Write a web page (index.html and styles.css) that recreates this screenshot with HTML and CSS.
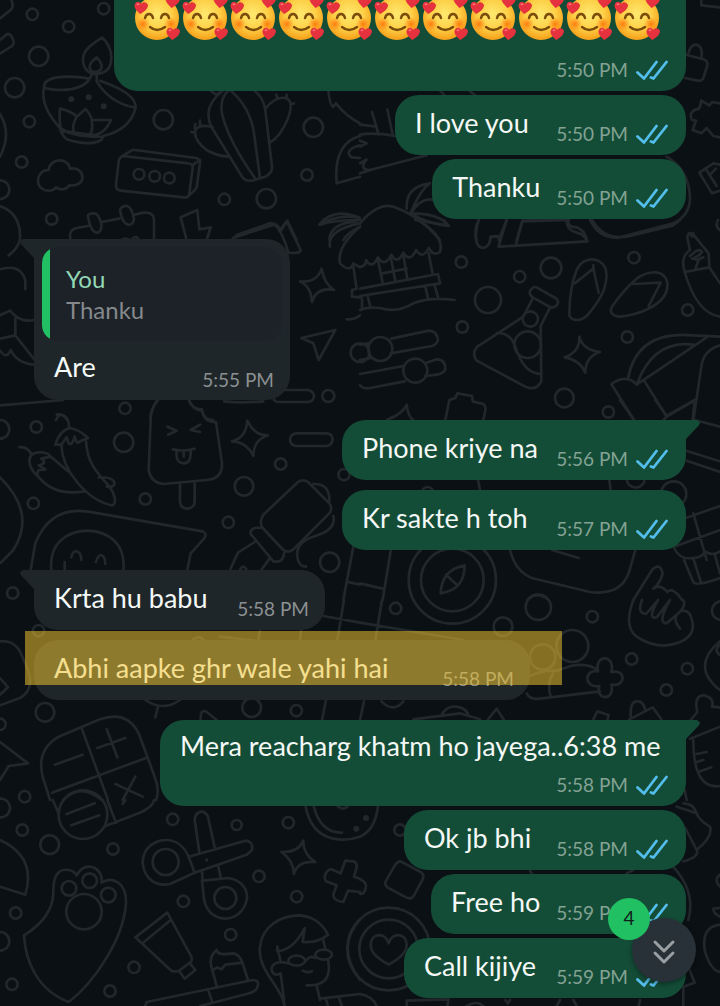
FILE: index.html
```html
<!DOCTYPE html>
<html lang="en">
<head>
<meta charset="utf-8">
<meta name="viewport" content="width=device-width, initial-scale=1">
<title>Chat</title>
<link rel="stylesheet" href="styles.css">
</head>
<body>
<svg class="defs" width="0" height="0" aria-hidden="true">
  <defs>
    <radialGradient id="face" cx="50%" cy="42%" r="56%">
      <stop offset="0" stop-color="#ffe970"/><stop offset=".6" stop-color="#fdd047"/><stop offset="1" stop-color="#f6a21b"/>
    </radialGradient>
    <radialGradient id="cheek"><stop offset="0" stop-color="#ff7a0c"/><stop offset="1" stop-color="#ff8d1a" stop-opacity="0"/></radialGradient>
    <symbol id="heart" viewBox="0 0 14 14">
      <path d="M6 13C3 10-1 6 1 3 2 0 6 0 7 3 9 0 13 1 14 4 14 8 10 11 6 13Z" fill="#e6323e"/>
      <path d="M3 4Q4 2 5 4" stroke="#ff7078" stroke-width="1.5" fill="none"/>
    </symbol>
    <symbol id="love" viewBox="0 0 48 48">
      <circle cx="23" cy="25" r="22" fill="url(#face)"/>
      <circle cx="9" cy="31" r="7" fill="url(#cheek)"/><circle cx="37" cy="31" r="7" fill="url(#cheek)"/>
      <path d="M11 25Q12 21 15 21T19 25M27 25Q28 21 31 21T35 25" fill="none" stroke="#7b4b0b" stroke-width="2.4" stroke-linecap="round"/>
      <path d="M16 34Q23 40 31 34" fill="none" stroke="#7b4b0b" stroke-width="2.4" stroke-linecap="round"/>
      <use href="#heart" x="0" y="8" width="14" height="14"/>
      <use href="#heart" x="31" y="1" width="15" height="15"/>
      <use href="#heart" x="32" y="34" width="14" height="14"/>
    </symbol>
    <symbol id="ticks" viewBox="0 0 32 20">
      <path d="M1.5 12.5 8 18.5 20.500 2M15 17.500 17.500 18.500 30.500 2" fill="none" stroke="#53bdeb" stroke-width="2.800" stroke-linecap="round" stroke-linejoin="round"/>
    </symbol>
  </defs>
</svg>

<main class="chat">
  <svg class="wallpaper" viewBox="0 0 720 1006" preserveAspectRatio="xMidYMin slice" aria-hidden="true">
    <g transform="scale(.33333)">
      <circle cx="97" cy="43" r="17"/><circle cx="206" cy="80" r="17"/><circle cx="311" cy="26" r="17"/><circle cx="116" cy="169" r="29"/><circle cx="44" cy="263" r="29"/><circle cx="88" cy="365" r="17"/><circle cx="65" cy="486" r="17"/><circle cx="490" cy="359" r="29"/><circle cx="940" cy="382" r="29"/><circle cx="921" cy="525" r="17"/><circle cx="673" cy="598" r="17"/><circle cx="799" cy="596" r="29"/><circle cx="155" cy="657" r="17"/><circle cx="0" cy="569" r="28"/>
      <path d="M0 55 34 28Q42 18 34 0M0 120 22 102Q34 100 41 125 42 132 36 138L0 161M0 342Q36 400 0 470"/>
      <path d="M306 113C276 132 246 152 249 182 252 212 270 224 290 222 320 220 334 204 334 172 334 146 320 124 306 113ZM290 172C274 184 267 194 269 204 271 213 278 216 288 216 299 214 305 208 305 198 304 186 296 178 290 172ZM276 222Q260 270 180 270 140 268 132 262 130 240 170 232 220 226 268 236M290 222V244Q330 310 407 323 410 280 300 242M132 262Q120 320 180 384 182 400 200 418 270 440 304 420L310 408Q390 390 407 323M180 326Q216 334 230 350L257 327Q276 350 275 360L333 360Q310 410 270 404L222 398 184 392Q176 360 180 326ZM230 350Q214 380 222 398M275 360Q280 390 270 404M184 386Q220 412 308 410"/>
      <circle class="dot" cx="214" cy="298" r="9"/><circle class="dot" cx="266" cy="292" r="9"/><circle class="dot" cx="311" cy="319" r="9"/>
      <path d="M126 566C104 550 114 510 146 510 150 472 206 472 210 506 256 498 264 562 208 556 194 574 176 568 168 562 156 576 138 574 126 566Z"/>
      <path d="M368 468 566 490Q580 494 578 504L568 580Q566 594 552 592L362 572Q346 570 348 554L356 484Q358 472 368 468L390 454Q396 448 406 450L588 474Q602 478 600 488L590 562Q586 572 560 592M576 496 600 480"/>
      <circle cx="417" cy="523" r="16"/><circle cx="464" cy="529" r="16"/><circle cx="508" cy="534" r="16"/>
      <path d="M630 270Q640 280 650 284L670 270Q620 310 626 350 628 374 640 390L726 530Q734 544 756 542L796 530Q818 518 816 500L796 330Q790 290 760 270M684 272Q656 300 668 350 690 430 766 536M690 270Q750 320 762 400L780 534M638 382Q600 370 586 390 580 420 620 450 650 468 684 470M796 326Q830 284 862 296 882 310 862 360 840 410 812 426M584 384 586 372M600 376V362M574 396 584 398M832 292 828 284M858 294 860 284M874 312 882 310"/>
      <path d="M985 270Q990 320 1000 320L1008 310Q1040 350 1080 370M1080 408Q1000 430 1010 550L1080 530M1080 436Q1030 450 1054 472L1080 474M0 618Q64 640 60 720M212 720Q204 690 230 684L264 678M306 666 358 656M404 644Q460 626 462 660V720M264 650Q262 640 284 640 296 642 304 672 306 698 288 698 272 694 264 650ZM360 630Q366 616 382 618 394 620 402 656 400 676 384 674 366 670 360 630ZM560 720 542 652 592 630 598 688 632 682 620 720M698 716 712 704 810 670Q832 668 842 692M842 692 862 662 890 720M958 674Q1000 620 1080 654 1020 640 958 674ZM1070 664Q990 670 988 720M1080 680Q1040 700 1030 720"/>
    </g>
    <g transform="translate(360) scale(.33333)">
      <path d="M1024 0V16L1080 22M984 166Q990 132 1010 134 1030 140 1024 172M978 164 1030 178Q1044 182 1042 196L1030 234Q1026 244 1012 242L976 234M240 272 254 286M330 274 346 286M36 336 56 404M82 328 98 404M0 374 50 380M0 404Q40 396 104 408M0 422 20 430 0 440M0 490Q30 470 14 486 0 510 30 510L200 466M0 520 40 508M1024 302 1048 316 1056 306 1080 310M1024 302Q1020 330 1010 328 984 336 996 360L1008 362 998 390 1024 400 1040 384 1060 408 1080 412M1018 518 1060 490 1080 494M1018 518 1056 580 1080 572M1038 508 1070 558M1068 506 1050 524M140 626Q136 560 210 550 180 570 152 640M152 640Q190 580 236 606M152 640Q240 640 266 678 200 670 152 640M0 670Q60 600 110 624 180 650 240 720M440 660 416 720M488 662 470 720M488 662 620 658Q618 690 650 698 670 702 680 720M356 660Q340 690 350 720M690 660Q720 720 780 712L940 670Q1004 640 986 560 972 500 920 470M390 720Q390 704 420 710M990 700Q1000 720 1000 700M1074 660Q1064 680 1080 690"/>
    </g>
    <g transform="translate(0 220) scale(.33333)">
      <path d="M60 60Q50 90 26 106M0 148Q60 130 76 180V208M0 286 30 272Q60 310 104 300M46 296V346L0 356M46 346 104 420M0 392Q20 420 32 390 50 430 104 434M0 556 190 540M364 60Q380 50 390 64 410 40 416 60M568 540Q576 570 606 572 612 600 640 600M472 540Q450 570 452 600M700 54 820 14Q842 20 864 94M838 34 860 4 902 90Q902 102 864 98M822 540Q818 510 850 510H924Q942 514 942 530 940 544 924 546H836Q820 546 822 530M672 544Q720 550 790 544"/>
      <circle cx="375" cy="565" r="17"/><circle cx="985" cy="528" r="18"/><circle cx="1080" cy="398" r="28"/>
      <path d="M965 146Q972 190 1002 210 950 200 936 246 934 200 900 184 950 190 965 146ZM1006 330 904 354 940 370 956 420ZM960 14Q1000 0 1080 0M990 80Q980 30 1080 10M1080 20Q1010 80 1020 130 1050 160 1060 130L1080 142M1060 140 1070 206 1056 210V230L1080 232M1040 298Q1060 300 1080 286M168 600Q180 570 202 600"/>
    </g>
    <g transform="translate(360 220) scale(.33333)">
      <circle cx="304" cy="126" r="17"/><circle cx="479" cy="170" r="17"/><circle cx="573" cy="144" r="31"/><circle cx="384" cy="240" r="39"/><circle cx="307" cy="321" r="17"/><circle cx="822" cy="113" r="17"/><circle cx="983" cy="270" r="17"/><circle cx="802" cy="351" r="17"/><circle cx="613" cy="534" r="28"/><circle cx="745" cy="576" r="17"/><circle cx="511" cy="297" r="23"/><circle cx="503" cy="374" r="40"/><circle cx="61" cy="387" r="36"/><circle cx="166" cy="452" r="36"/>
      <path d="M0 140Q18 140 18 120 36 150 54 112 74 144 94 104 112 136 130 98 150 130 168 90 188 120 206 84 220 110 240 96 254 50 180 4M54 120 68 188M92 110 106 184M130 104 142 178M206 100 218 162M68 160 140 146M0 206 234 162 240 190 0 228M0 270Q20 260 60 264 110 280 160 250 210 230 284 240M24 232 32 264M6 236V266M196 200 204 234M224 196 234 232M0 374 28 370M94 356 206 332Q230 332 234 360 230 374 216 378L92 400M0 420 32 414M0 462 130 438M200 428 230 418Q256 418 256 448 250 462 230 464L196 468M134 484 30 504Q10 508 0 496"/>
      <path d="M530 202 586 234Q600 244 590 256 580 266 568 260L518 232Q504 222 512 210 520 198 530 202ZM518 236 490 290 352 380Q334 400 350 422L500 502Q530 512 544 484L542 318 570 262M410 340Q450 336 466 380 490 460 542 462"/>
      <path d="M628 284C628 240 634 190 650 150 664 118 696 112 718 124 746 140 742 180 730 214 714 250 698 268 680 288 656 308 630 300 628 284ZM644 190 700 146 716 218M700 136V148M756 260Q790 210 830 176C870 148 912 150 922 186 926 222 904 246 870 264 840 280 800 290 776 290 754 286 748 274 756 260ZM820 192 902 188 866 258M658 350Q668 390 720 396 676 410 676 458 660 420 614 412 660 396 658 350ZM416 80 682 64Q676 32 650 22 620 22 626 0M440 0 416 78M486 4 468 74M486 4 626 0M356 0Q334 80 370 84 390 80 392 50H420M696 0Q730 60 800 50L940 16 960 0M166 0 264 16 250 0"/>
      <path d="M974 156 1048 142 1046 100 1000 44Q984 30 982 54L990 90Q960 110 974 156ZM990 108Q1020 80 1026 96 1016 110 996 116L1016 120 1006 146M1016 118 1030 112M974 156Q1010 280 1080 290M1048 142 1080 190M804 476Q830 330 1000 346L1080 350M832 490Q880 360 1000 374M754 492Q800 460 830 494L1040 352M754 492 822 600M854 484 920 590 1004 542M1000 600 1024 440Q1030 390 1080 376M910 600 920 590M256 600 268 540 286 534 292 520 336 528 338 544 370 552Q378 558 376 570L370 600M80 600Q130 580 140 554 144 590 160 600"/>
    </g>
    <g transform="translate(0 400) scale(.33333)">
      <circle cx="0" cy="88" r="28"/><circle cx="109" cy="81" r="17"/><circle cx="371" cy="127" r="29"/><circle cx="100" cy="310" r="17"/><circle cx="436" cy="297" r="17"/><circle cx="842" cy="192" r="17"/><circle cx="732" cy="259" r="28"/><circle cx="685" cy="367" r="17"/><circle cx="989" cy="487" r="29"/><circle cx="38" cy="579" r="17"/><circle cx="1032" cy="224" r="17"/>
      <path d="M170 44Q204 36 208 84M166 134Q180 90 210 84 240 90 264 114L240 124Q230 136 224 110 216 140 206 130L200 112 184 134ZM184 134C186 210 260 300 336 316 352 314 344 280 330 262 290 216 262 190 258 124M58 142Q80 138 94 162M110 226C80 196 82 162 110 158 130 154 146 160 152 170L124 176Q144 190 116 196L136 208 116 210ZM112 226Q160 290 254 274M150 168 204 214M296 232Q340 230 344 250 340 264 320 260"/>
      <path d="M474 0Q450 30 452 60L446 210Q452 248 490 252L620 240Q668 236 666 190L648 66Q610 66 606 28 576 28 566 0M540 252V306Q542 326 562 326 584 324 584 304V248M502 80 530 92 504 104M600 74 572 90 600 96M518 148Q550 156 584 146M530 152Q526 190 552 190 574 190 572 152M551 154V170"/>
      <path d="M742 62Q764 108 804 106 760 120 760 168 740 126 696 124 738 114 742 62ZM888 100H980Q998 102 998 118 996 136 980 138H888Q870 136 870 118 872 102 888 100ZM790 344 894 246Q910 236 924 246L988 310Q998 324 990 338L880 448Q866 460 850 450L788 384Q776 366 790 344ZM780 384Q750 380 752 402L820 484Q850 490 852 460M940 252Q990 250 988 304M1000 348Q1010 390 940 410 880 430 894 480 900 500 918 500M764 426 714 458 690 510M810 474 784 510M720 510Q730 490 740 510M0 232Q110 340 40 450L0 490M92 510 106 430Q150 320 260 334L608 394Q624 402 610 418L572 460 562 510M154 510C146 430 200 394 262 392 324 394 378 430 370 510M214 472Q218 452 230 454 244 458 244 480M288 486Q294 464 304 466 316 470 316 492M194 486V510M1060 440 1030 600M1044 546 1080 554"/>
    </g>
    <g transform="translate(360 400) scale(.33333)">
      <circle cx="941" cy="282" r="38"/><circle cx="827" cy="236" r="27"/><circle cx="203" cy="278" r="17"/><circle cx="277" cy="540" r="94"/><circle cx="277" cy="540" r="131"/>
      <path d="M242 580Q244 510 314 496 314 570 242 580ZM258 524 292 556M92 452 68 600M0 550 68 566M780 0 822 60M886 0 920 48 1004 0 998 60M1004 60 1080 80M978 152 1080 184M980 182 1080 216M354 240 360 270M748 240 752 270M450 450Q470 530 540 540L690 576Q780 588 806 520L826 450M576 450 656 474M820 600 876 510Q900 486 908 520 900 550 880 566 900 550 922 576 940 560 966 600M942 440 1080 390M960 360 1080 318M1000 340 1040 480M942 444Q960 480 996 474 1030 474 1034 454 1060 470 1080 454M972 480 1000 546Q1010 560 1080 534M1000 476 1024 550M1064 462 1080 520M502 600Q530 570 566 600"/>
    </g>
    <g transform="translate(0 600) scale(.33333)">
      <circle cx="116" cy="92" r="17"/><circle cx="135" cy="337" r="28"/><circle cx="0" cy="373" r="17"/><circle cx="74" cy="590" r="17"/><circle cx="755" cy="323" r="28"/><circle cx="889" cy="332" r="17"/>
      <path d="M0 124Q40 120 60 154L84 210Q104 270 60 294L0 316M0 234 24 262 0 284M0 426 84 490 26 498 0 540M150 600 128 530Q108 450 176 410L300 358Q380 330 416 400L464 530Q480 570 468 600M246 388 324 600M156 578 438 474M164 494 248 464M320 388 352 472M292 444 376 414M346 552 428 590M406 530 368 600M190 600Q240 546 306 600M436 300Q490 336 540 300M474 320 466 352M602 360Q600 324 620 336L650 360M970 48 1080 68M1032 0 1012 120M978 300 966 360M660 110 1080 160M780 90 774 130M904 90 898 130M580 118Q596 106 610 118"/>
    </g>
    <g transform="translate(360 600) scale(.33333)">
      <circle cx="107" cy="25" r="17"/><circle cx="429" cy="80" r="28"/><circle cx="535" cy="22" r="38"/><circle cx="697" cy="50" r="17"/><circle cx="815" cy="177" r="17"/><circle cx="982" cy="206" r="17"/><circle cx="919" cy="270" r="17"/><circle cx="637" cy="138" r="48"/><circle cx="548" cy="171" r="38"/><circle cx="1084" cy="32" r="28"/>
      <path d="M0 68 310 120M66 0 46 120M508 230Q540 210 590 212L640 196Q690 190 714 212M580 220Q560 250 572 290M500 280Q510 300 540 296L720 274M714 214C702 160 768 164 754 216 800 206 798 262 754 254 766 304 706 302 718 258 672 266 670 206 714 214ZM820 0Q790 80 830 110 890 150 950 130 1010 110 996 60 990 30 966 32 930 50 960 86M846 0Q830 40 858 42L894 0M894 0Q860 60 890 52L930 0M930 0Q890 70 920 70L950 44Q980 20 970 0M1080 124Q990 200 1080 270M1080 134Q1060 150 1080 166M64 304Q100 340 130 304M12 304 0 360M160 358 300 340 360 358M244 346Q260 316 290 320 320 324 326 348M384 358 410 326 432 360M700 358 712 334 746 346 742 360M812 350Q810 300 834 304 850 304 856 330M808 358 878 322 904 358M992 360 1012 336Q1000 284 1034 286 1064 296 1056 320L1080 322M990 416 1080 380M1000 420Q1000 570 1080 558M1010 462 1040 456M1010 486 1030 480M1020 514 1054 502M974 570 980 600"/>
    </g>
    <g transform="translate(0 800) scale(.33333)">
      <circle cx="2" cy="24" r="28"/><circle cx="67" cy="90" r="17"/><circle cx="149" cy="134" r="28"/><circle cx="339" cy="147" r="17"/><circle cx="518" cy="58" r="17"/><circle cx="710" cy="75" r="15"/><circle cx="865" cy="68" r="17"/><circle cx="777" cy="229" r="17"/><circle cx="550" cy="304" r="17"/><circle cx="890" cy="290" r="17"/><circle cx="692" cy="404" r="17"/><circle cx="402" cy="502" r="17"/><circle cx="330" cy="573" r="17"/><circle cx="47" cy="339" r="17"/><circle cx="36" cy="553" r="17"/><circle cx="0" cy="424" r="28"/><circle cx="249" cy="44" r="73"/><circle cx="497" cy="186" r="39"/><circle cx="676" cy="294" r="33"/><circle cx="207" cy="265" r="22"/><circle cx="269" cy="242" r="22"/><circle cx="325" cy="285" r="22"/><circle cx="252" cy="335" r="53"/>
      <path d="M200 42 284 10M214 76 298 46M158 0 176 40M322 0 348 68M316 78 420 38Q460 20 462 0M368 12 376 0M0 120Q110 170 76 284L0 260M72 406C130 370 158 330 160 280 158 220 180 206 206 210Q224 214 230 226 250 190 284 204 310 220 304 248C340 226 380 250 378 310 370 420 280 550 206 606 110 570 76 480 72 406ZM566 170C546 124 510 116 480 122 440 134 428 160 428 190 434 240 470 260 510 252L584 218ZM566 170 736 122Q760 124 756 150L740 164 584 218M598 156 584 60Q586 36 606 34 624 38 626 60L644 142M606 212 608 242 686 234C724 240 746 270 740 300 732 336 704 356 676 356 640 354 616 330 612 296L606 242M654 196 662 232M910 122Q908 160 946 186 892 182 882 222 880 180 844 156 894 158 910 122ZM502 338 406 412 514 512Q530 518 540 510L570 488Q580 480 572 466ZM512 360 432 426M568 488 586 510 554 536 538 514M440 606 758 540Q780 540 772 562 768 576 740 582L600 618M440 606 436 618M626 574 636 604M650 558 634 500Q626 470 650 450 650 468 700 460 720 464 728 490L744 540M636 512 652 502 664 508 676 494 728 488M916 14Q930 100 1000 116 1040 124 1080 110M940 14Q960 100 1026 98M1010 14Q1024 34 1042 20M1036 182 1062 184Q1072 190 1070 202L1062 230 1080 236M1036 182 1022 220 994 208Q980 208 974 230 974 244 984 246L1010 256 1000 284Q1000 302 1030 306L1044 272 1080 276M854 618C846 560 770 510 780 440 786 380 840 346 900 346 946 350 972 380 984 404 960 424 934 428 908 426L914 384Q880 450 832 454V440L842 486 866 490M842 486Q810 490 816 514 824 530 842 520L852 600M970 420 976 448M984 480Q1000 560 920 556M950 556 960 600M960 596 1080 582M978 598 984 618M1016 592 1026 618M916 484Q930 464 944 474M908 512Q922 520 936 514M1080 358Q1006 440 1080 540"/>
      <ellipse cx="890" cy="482" rx="25" ry="15"/><ellipse cx="971" cy="464" rx="25" ry="15"/>
      <circle class="dot" cx="620" cy="180" r="5"/><circle class="dot" cx="1069" cy="86" r="9"/>
    </g>
    <g transform="translate(360 800) scale(.33333)">
      <circle cx="86" cy="447" r="88"/><circle cx="86" cy="447" r="124"/><circle cx="120" cy="90" r="17"/><circle class="dot" cx="18" cy="54" r="9"/>
      <path d="M86 494C60 480 32 462 32 436 32 396 78 396 86 430 94 396 140 396 140 436 140 462 112 480 86 494ZM122 184 182 216Q194 224 188 238L162 286Q154 300 138 292L82 262Q72 254 78 242L106 194Q112 184 122 184ZM0 238Q30 250 10 280L0 282M54 18Q46 90 0 110M950 20 1010 40Q1016 60 1050 80 1060 110 1010 150 1020 170 970 184M970 10Q1000 10 1010 40M976 84 1010 150M930 190Q1010 270 985 360M1080 224Q1060 240 1080 260M1080 350Q1060 340 1060 326L1080 324M1080 374Q1024 380 1034 450 1050 510 1080 516M984 498 1004 548 970 560V618M140 618V602L266 598 262 618M0 582Q40 590 50 618M320 618Q350 600 370 618M436 600 444 610 450 600M600 600 590 618M640 600 650 618M840 600 836 618M510 212 516 222M800 220 820 210"/>
    </g>
  </svg>

  <section class="messages" aria-label="Messages">
    <article class="bubble sent stacked first">
      <div class="emojis" role="img" aria-label="Smiling faces with hearts">
        <svg><use href="#love"/></svg><svg><use href="#love"/></svg><svg><use href="#love"/></svg><svg><use href="#love"/></svg><svg><use href="#love"/></svg><svg><use href="#love"/></svg><svg><use href="#love"/></svg><svg><use href="#love"/></svg><svg><use href="#love"/></svg><svg><use href="#love"/></svg><svg><use href="#love"/></svg>
      </div>
      <div class="meta"><time>5:50 PM</time><svg class="ticks"><use href="#ticks"/></svg></div>
    </article>
    <article class="bubble sent w-roomy"><p>I love you</p><div class="meta"><time>5:50 PM</time><svg class="ticks"><use href="#ticks"/></svg></div></article>
    <article class="bubble sent w-small"><p>Thanku</p><div class="meta"><time>5:50 PM</time><svg class="ticks"><use href="#ticks"/></svg></div></article>

    <article class="bubble received tail reply group">
      <blockquote class="quote"><cite>You</cite><span>Thanku</span></blockquote>
      <div class="line"><p>Are</p><div class="meta"><time>5:55 PM</time></div></div>
    </article>

    <article class="bubble sent tail group w-large"><p>Phone kriye na</p><div class="meta"><time>5:56 PM</time><svg class="ticks"><use href="#ticks"/></svg></div></article>
    <article class="bubble sent spaced w-large"><p>Kr sakte h toh</p><div class="meta"><time>5:57 PM</time><svg class="ticks"><use href="#ticks"/></svg></div></article>

    <article class="bubble received tail group w-roomy"><p>Krta hu babu</p><div class="meta"><time>5:58 PM</time></div></article>
    <article class="bubble received spaced marked w-wide"><p>Abhi aapke ghr wale yahi hai</p><div class="meta"><time>5:58 PM</time></div></article>

    <article class="bubble sent tail group stacked w-full"><p>Mera reacharg khatm ho jayega..6:38 me</p><div class="meta"><time>5:58 PM</time><svg class="ticks"><use href="#ticks"/></svg></div></article>
    <article class="bubble sent w-medium"><p>Ok jb bhi</p><div class="meta"><time>5:58 PM</time><svg class="ticks"><use href="#ticks"/></svg></div></article>
    <article class="bubble sent w-small"><p>Free ho</p><div class="meta"><time>5:59 PM</time><svg class="ticks"><use href="#ticks"/></svg></div></article>
    <article class="bubble sent w-medium"><p>Call kijiye</p><div class="meta"><time>5:59 PM</time><svg class="ticks"><use href="#ticks"/></svg></div></article>
  </section>

  <button class="jump" type="button" aria-label="Scroll to latest, 4 unread">
    <svg viewBox="0 0 24 28" aria-hidden="true"><path d="M3 4 12 13 21 4M3 15 12 24 21 15"/></svg>
    <span class="count">4</span>
  </button>
</main>
</body>
</html>
```

FILE: styles.css
```css
* { box-sizing: border-box; }
body { margin: 0; background: #0b1014; font-family: Lato, "Open Sans", sans-serif; color: #f4f8f6; }
p, blockquote { margin: 0; }
.defs { position: absolute; }

.chat { position: relative; min-height: 100vh; overflow: hidden; }
.wallpaper { position: absolute; inset: 0; width: 100%; height: 100%; }
.wallpaper { fill: none; stroke: #22272b; stroke-width: 8; stroke-linecap: round; stroke-linejoin: round; }
.wallpaper .dot { fill: #22272b; stroke: none; }

.messages { position: relative; display: flex; flex-direction: column; gap: 4px; padding: 0 34px 8px; }
.bubble { position: relative; isolation: isolate; display: flex; justify-content: space-between; gap: 16px; min-height: 60px; padding: 10px 18px 9px 20px; border-radius: 24px; font-size: 27px; line-height: 36px; }
.sent { align-self: flex-end; background: #144d37; }
.received { align-self: flex-start; background: #1f2629; padding-right: 16px; }
.group { margin-top: 16px; }
.spaced { margin-top: 6px; }

.w-small { min-width: 251px; }
.w-medium { min-width: 282px; }
.w-roomy { min-width: 291px; }
.w-large { min-width: 344px; }
.w-wide { min-width: 496px; }
.w-full { min-width: 526px; }

.tail::before { content: ""; position: absolute; z-index: -1; top: 0; width: 40px; height: 28px; background: inherit; }
.sent.tail::before { right: -14px; clip-path: polygon(0 0, 92% 0, 100% 8%, 98% 18%, 65% 68%, 65% 100%, 0 100%); }
.received.tail::before { left: -14px; clip-path: polygon(100% 0, 8% 0, 0 8%, 2% 18%, 35% 68%, 35% 100%, 100% 100%); }

.meta { display: flex; align-items: center; align-self: flex-end; gap: 8px; font-size: 19px; line-height: 24px; color: #83a294; white-space: nowrap; }
.received .meta { color: #8b9092; }
.ticks { width: 32px; height: 20px; }

.stacked { flex-direction: column; gap: 11px; }
.stacked p { line-height: 32px; }
.first { padding-top: 0; border-radius: 0 0 24px 24px; }
.emojis { display: flex; height: 41px; margin-bottom: 6px; align-items: flex-end; padding-right: 6px; overflow: hidden; }
.emojis svg { flex: none; width: 48px; height: 48px; }

.reply { flex-direction: column; gap: 8px; min-width: 256px; padding: 8px; }
.quote { display: flex; flex-direction: column; padding: 16px 24px; border-radius: 16px; background: linear-gradient(to right, #21c063 8px, #1c2228 8px); font-size: 24px; line-height: 31px; color: #85898c; }
.quote cite { font-style: normal; color: #93d9b5; }
.line { display: flex; justify-content: space-between; padding: 0 8px 0 12px; min-height: 43px; }

.marked::after { content: ""; position: absolute; inset: -9px -32px 15px -9px; background: rgba(246, 200, 47, .52); }

.jump { position: absolute; right: 24px; bottom: 24px; display: grid; place-items: center; width: 64px; height: 64px; padding: 0; border: 0; border-radius: 50%; background: #283138; box-shadow: 0 2px 5px rgba(0, 0, 0, .4); font: inherit; }
.jump svg { width: 24px; height: 28px; margin-top: 4px; fill: none; stroke: #9a9fa1; stroke-width: 3; stroke-linecap: round; stroke-linejoin: round; }
.count { position: absolute; left: -24px; top: -20px; width: 42px; height: 42px; border-radius: 50%; background: #21c063; color: #102018; font-size: 19px; line-height: 40px; text-align: center; }
```
